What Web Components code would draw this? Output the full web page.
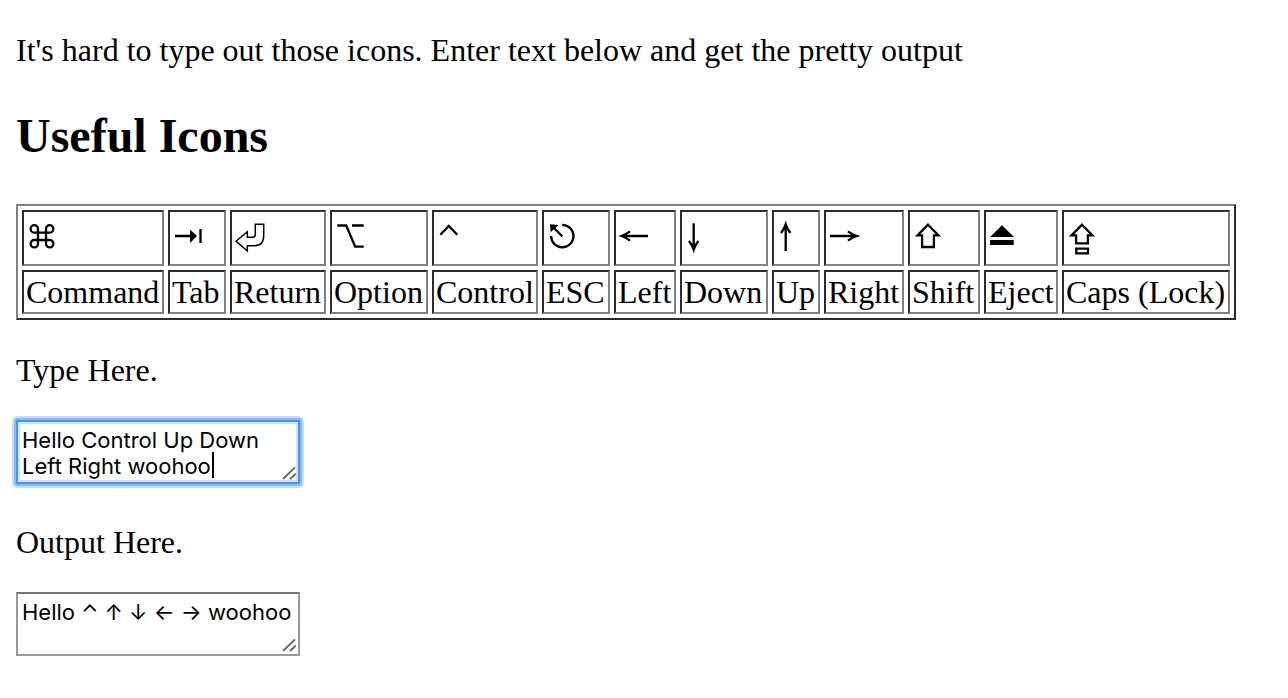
<!DOCTYPE html>
<html lang="en">
<head>
<meta charset="utf-8">
<title>Icon Typer</title>
<style>
  body {
    margin: 0;
    background: #fff;
    color: #000;
    font: 32px/36px "Liberation Serif", serif;
  }
</style>
</head>
<body>
<icon-typer>
  <span slot="intro">It's hard to type out those icons. Enter text below and get the pretty output</span>
  <span slot="title">Useful Icons</span>
</icon-typer>

<script>
const GLYPHS = {
  Command: '<path d="M12 14.9a3.7 3.7 0 1 0-3.7 3.7H23.7a3.7 3.7 0 1 0-3.7-3.7V29.7a3.7 3.7 0 1 0 3.7-3.7H8.3a3.7 3.7 0 1 0 3.7 3.7z"/>',
  Tab: '<path d="M3 22H20M28.5 15V29"/><path class="fill" d="M18 15.5L25 22L18 29z"/>',
  Return: '<path class="thin" d="M21.3 10.3H29.7V21.5Q29.7 31.7 20.5 31.7H13.3V36.8L2 27.3L13.3 17.8V23.3H18.5Q21.3 23.3 21.3 20.5z"/>',
  Option: '<path d="M3.3 11.5H12.2L21.2 32.7H29.7M18 11.5H29.7"/>',
  Control: '<path d="M4.3 20.7L12.8 12L21.3 20.7"/>',
  ESC: '<path d="M16.2 10.9A11.2 11.2 0 1 1 5.1 22M7 13L16.4 22.5"/><path class="fill" d="M4 10.2L12.5 11L4.6 18.2z"/>',
  Left: '<path d="M30 22H4M12 17.4Q8 20.5 3.4 22Q8 23.5 12 26.6"/>',
  Down: '<path d="M9.7 9.3V35M5 27Q8.2 31 9.7 35.7Q11.2 31 14.4 27"/>',
  Up: '<path d="M9.7 37V11M5 19Q8.2 15 9.7 10.3Q11.2 15 14.4 19"/>',
  Right: '<path d="M2 22H28M20 17.4Q24 20.5 28.8 22Q24 23.5 20 26.6"/>',
  Shift: '<path d="M16 10.7L26.5 21.4H21.9V33H10.1V21.4H5.5z"/>',
  Eject: '<path class="fill" d="M14 11.2L26 23H2zM2 26H25.7V31H2z"/>',
  'Caps (Lock)': '<path d="M16 10.7L26.5 21.4H21.9V29.3H10.1V21.4H5.5zM10.3 34.7H22V39.4H10.3z"/>'
};

const WIDTHS = {
  Command: 142, Tab: 58, Return: 96, Option: 98, Control: 106, ESC: 68, Left: 62,
  Down: 88, Up: 48, Right: 80, Shift: 72, Eject: 74, 'Caps (Lock)': 168
};

class KeyGlyph extends HTMLElement {
  connectedCallback() {
    const name = this.getAttribute('name');
    this.attachShadow({ mode: 'open' }).innerHTML = `
      <style>
        :host { display: block; }
        svg { display: block; width: 32px; height: 48px; fill: none; stroke: #000; stroke-width: 2.3; }
        .fill { fill: #000; stroke: none; }
        .thin { stroke-width: 1.5; }
      </style>
      <svg viewBox="0 0 32 48" role="img" aria-label="${name} key">${GLYPHS[name]}</svg>`;
  }
}
customElements.define('key-glyph', KeyGlyph);

class KeyTable extends HTMLElement {
  connectedCallback() {
    const names = Object.keys(GLYPHS);
    this.attachShadow({ mode: 'open' }).innerHTML = `
      <style>
        :host { display: block; }
        table {
          border: 2px solid;
          border-color: #808080 #2c2c2c #2c2c2c #808080;
          border-spacing: 4px;
        }
        td {
          box-sizing: border-box;
          padding: 2px;
          border: 2px solid;
          border-color: #2c2c2c #808080 #808080 #2c2c2c;
          white-space: nowrap;
        }
      </style>
      <table>
        <tbody>
          <tr>${names.map(n => `<td style="min-width: ${WIDTHS[n]}px"><key-glyph name="${n}"></key-glyph></td>`).join('')}</tr>
          <tr>${names.map(n => `<td>${n}</td>`).join('')}</tr>
        </tbody>
      </table>`;
  }
}
customElements.define('key-table', KeyTable);

class TextPanel extends HTMLElement {
  connectedCallback() {
    this.attachShadow({ mode: 'open' }).innerHTML = `
      <style>
        :host { display: block; margin-top: 32px; }
        label { display: block; margin-bottom: 32px; }
        .box { position: relative; width: 284px; }
        textarea {
          display: block;
          box-sizing: border-box;
          width: 100%;
          height: 64px;
          margin: 0;
          padding: 5px 4px 3px;
          border: 2px solid #999;
          border-top-color: #767676;
          border-radius: 0;
          outline: none;
          overflow: hidden;
          resize: none;
          background: #fff;
          color: #000;
          font: 22px/26px Inter, "DejaVu Sans", sans-serif;
        }
        :host([active]) .box {
          border-radius: 2px;
          box-shadow: 0 0 0 2px #7fbcff, 0 0 0 4px #c4e0ff;
        }
        :host([active]) textarea {
          border-color: #5096de;
          box-shadow: inset 0 0 0 2px #cce4ff;
          caret-color: transparent;
        }
        .grip {
          position: absolute;
          right: 2px;
          bottom: 2px;
          width: 16px;
          height: 16px;
          fill: none;
          stroke: #666;
          stroke-width: 1.9;
        }
        .caret { display: none; }
        :host([active]) .caret {
          display: block;
          position: absolute;
          left: 196px;
          top: 32px;
          width: 2px;
          height: 26px;
          background: #000;
        }
      </style>
      <label for="text"><slot></slot></label>
      <div class="box">
        <textarea id="text" spellcheck="false"></textarea>
        <span class="caret"></span>
        <svg class="grip" viewBox="0 0 16 16" aria-hidden="true"><path d="M1 13L13 1.4M8 13L13.8 7.6"/></svg>
      </div>`;
    this.area = this.shadowRoot.querySelector('textarea');
    this.area.value = this.getAttribute('value') || '';
    this.area.readOnly = this.hasAttribute('readonly');
  }
}
customElements.define('text-panel', TextPanel);

const SYMBOLS = { Command: '⌘', Tab: '⇥', Return: '⏎', Option: '⌥', Control: '⌃', ESC: '⎋', Left: '←', Down: '↓', Up: '↑', Right: '→', Shift: '⇧', Eject: '⏏', Caps: '⇪' };

class IconTyper extends HTMLElement {
  connectedCallback() {
    const root = this.attachShadow({ mode: 'open' });
    root.innerHTML = `
      <style>
        :host { display: block; padding: 32px 16px; }
        p { margin: 0; }
        h2 { margin: 40px 0; font-size: 48px; line-height: 56px; }
        #output { margin-top: 40px; }
      </style>
      <p><slot name="intro"></slot></p>
      <h2><slot name="title"></slot></h2>
      <key-table></key-table>
      <text-panel id="input" active value="Hello Control Up Down Left Right woohoo">Type Here.</text-panel>
      <text-panel id="output" readonly>Output Here.</text-panel>`;
    const input = root.getElementById('input');
    const output = root.getElementById('output');
    const render = () => {
      output.area.value = input.area.value.replace(/[A-Za-z]+/g, word => SYMBOLS[word] || word);
    };
    input.area.addEventListener('input', render);
    render();
  }
}
customElements.define('icon-typer', IconTyper);
</script>
</body>
</html>
